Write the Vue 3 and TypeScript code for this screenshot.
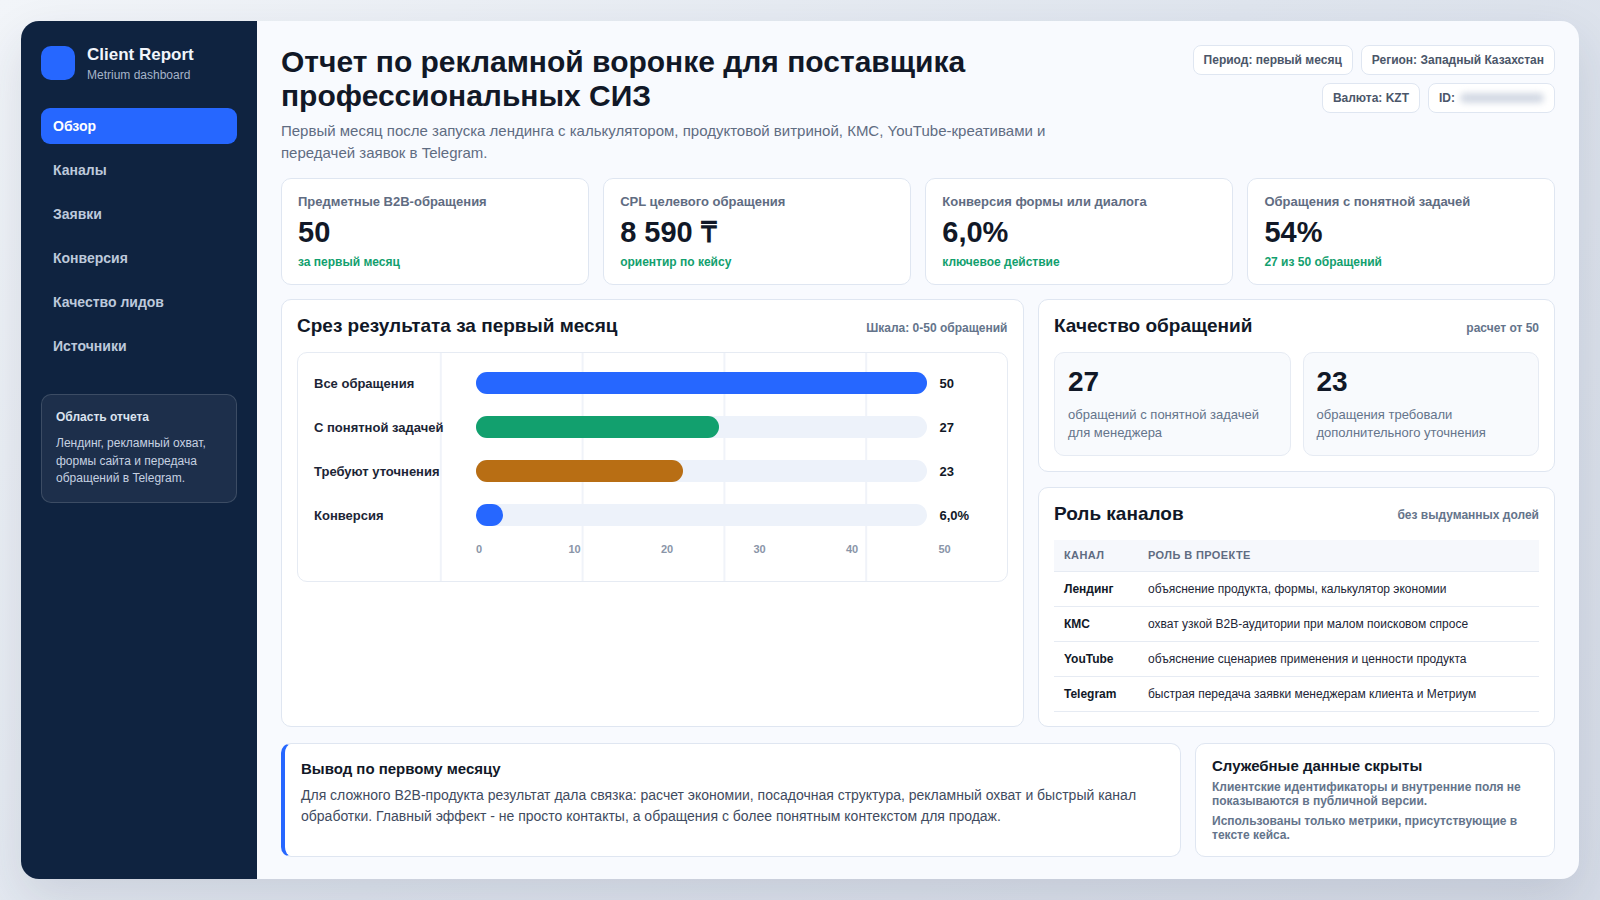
<script setup lang="ts">
interface Kpi {
  label: string
  value: string
  note: string
}

interface Bar {
  label: string
  value: string
  width: number
  color: string
}

const navItems = ['Обзор', 'Каналы', 'Заявки', 'Конверсия', 'Качество лидов', 'Источники']

const kpis: Kpi[] = [
  { label: 'Предметные B2B-обращения', value: '50', note: 'за первый месяц' },
  { label: 'CPL целевого обращения', value: '8 590 ₸', note: 'ориентир по кейсу' },
  { label: 'Конверсия формы или диалога', value: '6,0%', note: 'ключевое действие' },
  { label: 'Обращения с понятной задачей', value: '54%', note: '27 из 50 обращений' },
]

const bars: Bar[] = [
  { label: 'Все обращения', value: '50', width: 100, color: '#2667ff' },
  { label: 'С понятной задачей', value: '27', width: 54, color: '#12a06e' },
  { label: 'Требуют уточнения', value: '23', width: 46, color: '#b86e14' },
  { label: 'Конверсия', value: '6,0%', width: 6, color: '#2667ff' },
]

const ticks = [0, 10, 20, 30, 40, 50]

const channels = [
  { name: 'Лендинг', role: 'объяснение продукта, формы, калькулятор экономии' },
  { name: 'КМС', role: 'охват узкой B2B-аудитории при малом поисковом спросе' },
  { name: 'YouTube', role: 'объяснение сценариев применения и ценности продукта' },
  { name: 'Telegram', role: 'быстрая передача заявки менеджерам клиента и Метриум' },
]
</script>

<template>
  <div class="shell">
    <aside class="sidebar">
      <div class="brand">
        <div class="brand-logo"></div>
        <div class="brand-text">
          <div class="brand-title">Client Report</div>
          <div class="brand-sub">Metrium dashboard</div>
        </div>
      </div>
      <nav class="nav">
        <a v-for="(item, index) in navItems" :key="item" :class="['nav-item', { active: index === 0 }]">{{ item }}</a>
      </nav>
      <div class="side-note">
        <div class="side-note-title">Область отчета</div>
        <p>Лендинг, рекламный охват, формы сайта и передача обращений в Telegram.</p>
      </div>
    </aside>

    <main class="main">
      <header class="header">
        <div class="header-text">
          <h1>Отчет по рекламной воронке для поставщика профессиональных СИЗ</h1>
          <p>Первый месяц после запуска лендинга с калькулятором, продуктовой витриной, КМС, YouTube-креативами и передачей заявок в Telegram.</p>
        </div>
        <div class="pills">
          <span class="pill">Период: первый месяц</span>
          <span class="pill">Регион: Западный Казахстан</span>
          <span class="pill">Валюта: KZT</span>
          <span class="pill">ID: <i class="masked"></i></span>
        </div>
      </header>

      <section class="kpis">
        <div v-for="kpi in kpis" :key="kpi.label" class="kpi">
          <div class="kpi-label">{{ kpi.label }}</div>
          <div class="kpi-value">{{ kpi.value }}</div>
          <div class="kpi-note">{{ kpi.note }}</div>
        </div>
      </section>

      <section class="middle">
        <div class="panel">
          <div class="panel-head">
            <h2>Срез результата за первый месяц</h2>
            <span>Шкала: 0-50 обращений</span>
          </div>
          <div class="chart">
            <div v-for="bar in bars" :key="bar.label" class="bar-row">
              <div class="bar-label">{{ bar.label }}</div>
              <div class="bar-track">
                <div class="bar-fill" :style="{ width: bar.width + '%', background: bar.color }"></div>
              </div>
              <div class="bar-value">{{ bar.value }}</div>
            </div>
            <div class="axis">
              <span v-for="tick in ticks" :key="tick">{{ tick }}</span>
            </div>
          </div>
        </div>

        <div class="right-col">
          <div class="panel">
            <div class="panel-head">
              <h2>Качество обращений</h2>
              <span>расчет от 50</span>
            </div>
            <div class="stats">
              <div class="stat">
                <strong>27</strong>
                <p>обращений с понятной задачей для менеджера</p>
              </div>
              <div class="stat">
                <strong>23</strong>
                <p>обращения требовали дополнительного уточнения</p>
              </div>
            </div>
          </div>
          <div class="panel panel-grow">
            <div class="panel-head">
              <h2>Роль каналов</h2>
              <span>без выдуманных долей</span>
            </div>
            <table class="channels">
              <thead>
                <tr>
                  <th class="col-name">Канал</th>
                  <th>Роль в проекте</th>
                </tr>
              </thead>
              <tbody>
                <tr v-for="row in channels" :key="row.name">
                  <td class="cell-name">{{ row.name }}</td>
                  <td>{{ row.role }}</td>
                </tr>
              </tbody>
            </table>
          </div>
        </div>
      </section>

      <section class="bottom">
        <div class="summary">
          <h3>Вывод по первому месяцу</h3>
          <p>Для сложного B2B-продукта результат дала связка: расчет экономии, посадочная структура, рекламный охват и быстрый канал обработки. Главный эффект - не просто контакты, а обращения с более понятным контекстом для продаж.</p>
        </div>
        <div class="service">
          <h3>Служебные данные скрыты</h3>
          <p>Клиентские идентификаторы и внутренние поля не показываются в публичной версии.</p>
          <p>Использованы только метрики, присутствующие в тексте кейса.</p>
        </div>
      </section>
    </main>
  </div>
</template>

<style>
html,
body {
  margin: 0;
  height: 100%;
  background: linear-gradient(135deg, #f2f5f9 0%, #dfe5ee 50%, #d6dce7 100%);
}
</style>

<style scoped>
.shell {
  box-sizing: border-box;
  width: 1558px;
  height: 858px;
  margin: 21px 0 0 21px;
  display: flex;
  border-radius: 18px;
  overflow: hidden;
  background: #f8fafe;
  box-shadow: 0 20px 50px rgba(30, 45, 75, 0.12);
  font-family: 'Liberation Sans', Arial, sans-serif;
  color: #111827;
}

.sidebar {
  box-sizing: border-box;
  width: 236px;
  flex-shrink: 0;
  padding: 25px 20px;
  background: #0f2340;
}

.brand {
  display: flex;
  align-items: flex-start;
  gap: 12px;
}

.brand-logo {
  width: 34px;
  height: 34px;
  border-radius: 10px;
  background: #2667ff;
}

.brand-text {
  margin-top: 1px;
}

.brand-title {
  font-size: 17px;
  line-height: 16px;
  font-weight: 700;
  color: #f1f5fb;
}

.brand-sub {
  margin-top: 5px;
  font-size: 12px;
  line-height: 15px;
  color: #a6b4c9;
}

.nav {
  margin-top: 25px;
  display: flex;
  flex-direction: column;
  gap: 8px;
}

.nav-item {
  height: 36px;
  padding: 0 12px;
  display: flex;
  align-items: center;
  border-radius: 9px;
  font-size: 14px;
  font-weight: 700;
  color: #bdc9db;
}

.nav-item.active {
  background: #2667ff;
  color: #ffffff;
}

.side-note {
  margin-top: 30px;
  padding: 14px;
  border: 1px solid rgba(255, 255, 255, 0.14);
  border-radius: 10px;
  background: rgba(255, 255, 255, 0.06);
}

.side-note-title {
  font-size: 12px;
  line-height: 16px;
  font-weight: 700;
  color: #dbe3ef;
}

.side-note p {
  margin: 10px 0 0;
  font-size: 12px;
  line-height: 17.7px;
  color: #c6d1e1;
}

.main {
  flex: 1;
  min-width: 0;
  box-sizing: border-box;
  padding: 24px 24px 22.5px;
  display: flex;
  flex-direction: column;
  gap: 14.5px;
}

.header {
  height: 118px;
  display: flex;
  justify-content: space-between;
  gap: 20px;
}

.header-text {
  width: 790px;
}

.header h1 {
  margin: 0;
  font-size: 30px;
  line-height: 34px;
  font-weight: 700;
  color: #111827;
}

.header p {
  margin: 7px 0 0;
  font-size: 15px;
  line-height: 22px;
  color: #5f6c82;
}

.pills {
  width: 380px;
  display: flex;
  flex-wrap: wrap;
  justify-content: flex-end;
  align-content: flex-start;
  gap: 8px;
}

.pill {
  box-sizing: border-box;
  height: 30px;
  padding: 0 10px;
  display: inline-flex;
  align-items: center;
  gap: 5px;
  border: 1px solid #dfe6f1;
  border-radius: 8px;
  background: #ffffff;
  font-size: 12px;
  font-weight: 700;
  color: #4b5669;
}

.masked {
  display: block;
  width: 84px;
  height: 10px;
  border-radius: 5px;
  background: #d3d9e4;
  filter: blur(3px);
}

.kpis {
  display: grid;
  grid-template-columns: repeat(4, 1fr);
  gap: 14.5px;
}

.kpi {
  box-sizing: border-box;
  height: 107px;
  padding: 14px 16px;
  border: 1px solid #dfe6f1;
  border-radius: 10px;
  background: #ffffff;
}

.kpi-label {
  font-size: 13px;
  line-height: 17px;
  font-weight: 700;
  color: #5f6c82;
}

.kpi-value {
  margin-top: 4px;
  font-size: 29px;
  line-height: 36px;
  font-weight: 700;
  color: #111827;
}

.kpi-note {
  margin-top: 4px;
  font-size: 12px;
  line-height: 16px;
  font-weight: 700;
  color: #12a06e;
}

.middle {
  flex: 1;
  min-height: 0;
  display: grid;
  grid-template-columns: 742.5px 1fr;
  gap: 14.5px;
}

.panel {
  box-sizing: border-box;
  padding: 16px 15px 15px;
  border: 1px solid #dfe6f1;
  border-radius: 10px;
  background: #ffffff;
}

.panel-grow {
  flex: 1;
  min-height: 0;
}

.panel-head {
  height: 20px;
  margin-bottom: 16px;
  display: flex;
  justify-content: space-between;
  align-items: center;
}

.panel-head h2 {
  margin: 0;
  font-size: 19px;
  line-height: 20px;
  font-weight: 700;
  color: #111827;
}

.panel-head span {
  margin-top: 3px;
  font-size: 12px;
  font-weight: 700;
  color: #64748b;
}

.chart {
  box-sizing: border-box;
  height: 230px;
  padding: 19px 16px 0;
  border: 1px solid #e6ebf3;
  border-radius: 10px;
  background-image: linear-gradient(#ffffff, #ffffff), linear-gradient(to right, #f0f3f9 2px, transparent 2px);
  background-size: 3px 100%, 20% 100%;
  background-position: 0 0, 0 0;
  background-repeat: no-repeat, repeat;
}

.bar-row {
  display: grid;
  grid-template-columns: 150px 1fr 52px;
  align-items: center;
  gap: 12px;
  height: 22px;
  margin-bottom: 22px;
}

.bar-label {
  font-size: 13px;
  font-weight: 700;
  white-space: nowrap;
  color: #1c2536;
}

.bar-track {
  height: 22px;
  border-radius: 11px;
  background: #edf2fa;
}

.bar-fill {
  height: 100%;
  border-radius: 11px;
}

.bar-value {
  padding-left: 1px;
  font-size: 13px;
  font-weight: 700;
  color: #111827;
}

.axis {
  margin: -5px 0 0 162px;
  display: flex;
  justify-content: space-between;
  font-size: 11px;
  font-weight: 700;
  color: #8a95a8;
}

.axis span {
  width: 52px;
}

.right-col {
  display: flex;
  flex-direction: column;
  gap: 14.5px;
  min-height: 0;
}

.stats {
  display: grid;
  grid-template-columns: 1fr 1fr;
  gap: 12px;
}

.stat {
  box-sizing: border-box;
  height: 104px;
  padding: 12px 13px;
  border: 1px solid #e6ebf3;
  border-radius: 10px;
  background: #f8fafd;
}

.stat strong {
  display: block;
  font-size: 28px;
  line-height: 33px;
  font-weight: 700;
  color: #111827;
}

.stat p {
  margin: 8px 0 0;
  font-size: 13px;
  line-height: 18px;
  color: #64748b;
}

.channels {
  width: 100%;
  border-collapse: collapse;
  table-layout: fixed;
}

.channels th {
  box-sizing: border-box;
  height: 32px;
  padding: 0 10px;
  text-align: left;
  background: #f6f8fc;
  border-bottom: 1px solid #e6ebf3;
  font-size: 11px;
  font-weight: 700;
  letter-spacing: 0.4px;
  text-transform: uppercase;
  color: #5f6c82;
}

.channels .col-name {
  width: 84px;
}

.channels td {
  height: 34px;
  padding: 0 10px;
  border-bottom: 1px solid #e6ebf3;
  font-size: 12px;
  color: #1c2536;
}

.channels .cell-name {
  font-weight: 700;
  color: #111827;
}

.bottom {
  margin-top: 1px;
  display: grid;
  grid-template-columns: 899.5px 1fr;
  gap: 14.5px;
}

.summary,
.service {
  box-sizing: border-box;
  height: 114px;
  border: 1px solid #dfe6f1;
  border-radius: 10px;
  background: #ffffff;
}

.summary {
  padding: 15px 16px;
  border-left: 4px solid #2667ff;
}

.summary h3,
.service h3 {
  margin: 0;
  font-size: 15px;
  line-height: 20px;
  font-weight: 700;
  color: #111827;
}

.summary p {
  margin: 6px 0 0;
  font-size: 14px;
  line-height: 21px;
  color: #3f4b60;
}

.service {
  padding: 12px 16px;
}

.service p {
  margin: 4px 0 6px;
  font-size: 12px;
  line-height: 14px;
  font-weight: 700;
  color: #64748b;
}
</style>
